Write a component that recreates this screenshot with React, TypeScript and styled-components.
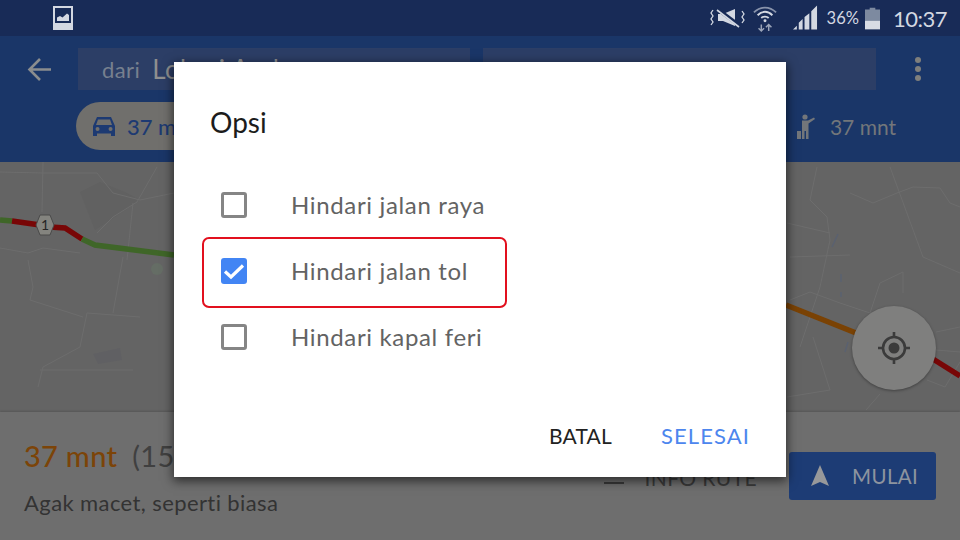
import React from "react";
import styled, { createGlobalStyle } from "styled-components";

const Global = createGlobalStyle`
  html, body { margin: 0; padding: 0; background: #6e6e6e; }
  * { box-sizing: border-box; }
`;

const Screen = styled.div`
  position: relative;
  width: 960px;
  height: 540px;
  overflow: hidden;
  display: flex;
  flex-direction: column;
  font-family: Lato, "Open Sans", sans-serif;
`;

const StatusBar = styled.div`
  height: 36px;
  flex: none;
  background: #182b57;
  display: flex;
  align-items: center;
  padding: 0 13px 0 53px;
  color: #d3d8e2;
`;
const StatusRight = styled.div`
  margin-left: auto;
  display: flex;
  align-items: center;
`;
const Battery = styled.span`
  font-size: 16.5px;
  margin: 0 6px 0 9px;
`;
const Clock = styled.span`
  font-size: 22px;
  margin-left: 13px;
  letter-spacing: -0.5px;
`;

const AppBar = styled.div`
  height: 126px;
  flex: none;
  background: #1a3668;
  display: flex;
  flex-direction: column;
  padding: 12px 0 12px 27px;
`;
const SearchRow = styled.div`
  display: flex;
  align-items: center;
  height: 42px;
`;
const SearchField = styled.div<{ $w: number }>`
  width: ${(p) => p.$w}px;
  height: 42px;
  background: #2c3e66;
  margin-right: 13px;
  display: flex;
  align-items: center;
  padding-left: 24px;
  font-size: 22px;
  color: #77808f;
  letter-spacing: 0.4px;
  white-space: nowrap;
  overflow: hidden;
  b { font-weight: 400; color: #8f8f8f; margin-left: 12px; font-size: 26px; }
`;
const BackBox = styled.div`
  width: 51px;
  height: 42px;
  flex: none;
  display: flex;
  align-items: center;
`;
const MoreBox = styled.div`
  margin-left: 26px;
  display: flex;
  flex-direction: column;
  gap: 3px;
`;
const Dot = styled.span`
  width: 6px;
  height: 6px;
  border-radius: 50%;
  background: #7f7f7c;
`;
const ModeRow = styled.div`
  display: flex;
  align-items: center;
  height: 48px;
  margin-top: 12px;
  padding-left: 49px;
  justify-content: space-between;
  padding-right: 64px;
`;
const ModePill = styled.div`
  width: 240px;
  height: 48px;
  border-radius: 24px;
  background: #706f6c;
  display: flex;
  align-items: center;
  padding-left: 17px;
  gap: 12px;
  color: #1d3a72;
  font-size: 22px;
  font-weight: 500;
`;
const WalkMode = styled.div`
  display: flex;
  align-items: center;
  gap: 15px;
  color: #73767a;
  font-size: 21px;
`;

const MapArea = styled.div`
  position: relative;
  height: 250px;
  flex: none;
  background: #646464;
  svg { display: block; }
`;
const LocateFab = styled.div`
  position: absolute;
  left: 852px;
  top: 144px;
  width: 84px;
  height: 84px;
  border-radius: 50%;
  background: #7f7f7e;
  box-shadow: 0 1px 3px rgba(0, 0, 0, 0.35);
  display: flex;
  align-items: center;
  justify-content: center;
`;

const BottomPanel = styled.div`
  flex: 1;
  background: #6e6e6e;
  display: flex;
  justify-content: space-between;
  padding: 26px 24px 0;
  box-shadow: 0 -1px 2px rgba(0, 0, 0, 0.15);
  position: relative;
`;
const Summary = styled.div`
  display: flex;
  flex-direction: column;
  gap: 16px;
`;
const Eta = styled.div`
  font-size: 29px;
  line-height: 36px;
  color: #7c4408;
  font-weight: 500;
  letter-spacing: 0.3px;
  span { color: #404040; margin-left: 15px; font-weight: 400; }
`;
const Traffic = styled.div`
  font-size: 22px;
  line-height: 26px;
  color: #333;
  letter-spacing: 0.4px;
`;
const Actions = styled.div`
  display: flex;
  align-items: flex-start;
  gap: 32px;
  padding-top: 14px;
`;
const InfoRoute = styled.div`
  display: flex;
  align-items: center;
  gap: 21px;
  font-size: 21px;
  line-height: 26px;
  color: #3a3a3a;
  margin-top: 13px;
  letter-spacing: 0.4px;
`;
const InfoIcon = styled.span`
  width: 20px;
  height: 12px;
  display: block;
  border-bottom: 2px solid #3a3a3a;
`;
const StartButton = styled.div`
  width: 147px;
  height: 48px;
  border-radius: 3px;
  background: #1d3c75;
  display: flex;
  align-items: center;
  padding-left: 22px;
  gap: 23px;
  color: #8d949f;
  font-size: 20.5px;
  letter-spacing: 0.4px;
`;

const Dialog = styled.div`
  position: absolute;
  left: 174px;
  top: 62px;
  width: 612px;
  height: 415px;
  background: #fff;
  box-shadow: 0 3px 10px 1px rgba(0, 0, 0, 0.6);
  display: flex;
  flex-direction: column;
  padding: 40px 36px 0 28px;
`;
const Title = styled.div`
  font-size: 28px;
  line-height: 40px;
  color: #1c1c1c;
  margin-left: 8px;
  height: 40px;
`;
const OptionList = styled.div`
  display: flex;
  flex-direction: column;
  margin-top: 30px;
`;
const Option = styled.div`
  height: 66px;
  display: flex;
  align-items: center;
  gap: 44px;
  padding-left: 19px;
  position: relative;
`;
const OptionLabel = styled.span`
  font-size: 24px;
  line-height: 28px;
  color: #636363;
  letter-spacing: 0.65px;
  margin-top: -1px;
`;
const CheckBox = styled.span<{ $on?: boolean }>`
  width: 26px;
  height: 26px;
  flex: none;
  border-radius: 3px;
  display: flex;
  align-items: center;
  justify-content: center;
  border: ${(p) => (p.$on ? "0" : "3px solid #858585")};
  background: ${(p) => (p.$on ? "#4285f4" : "transparent")};
`;
const Highlight = styled.div`
  position: absolute;
  left: 0;
  top: -1px;
  width: 305px;
  height: 71px;
  border: 2px solid #e2101e;
  border-radius: 7px;
`;
const DialogActions = styled.div`
  margin-top: auto;
  display: flex;
  justify-content: flex-end;
  gap: 49px;
  height: 55px;
`;
const ActionText = styled.span<{ $primary?: boolean }>`
  font-size: ${(p) => (p.$primary ? "22px" : "21px")};
  line-height: 28px;
  color: ${(p) => (p.$primary ? "#4d86ee" : "#222")};
  letter-spacing: ${(p) => (p.$primary ? "1.1px" : "0.2px")};
`;

const roads = [
  "M890 5L923 95L960 111",
  "M850 31L873 41L897 31L913 25L940 26L950 41L960 45",
  "M817 5L810 38L827 55L830 78L820 125L800 185",
  "M787 61L830 71",
  "M790 95L850 93",
  "M790 138L810 130L840 141L870 151",
  "M870 151L880 121L903 110L903 131",
  "M936 170L960 165",
  "M936 188L960 190",
  "M927 218L945 225L960 200",
  "M787 235L830 228L813 175",
  "M880 232L866 248",
  "M43 0L42 50",
  "M0 10L43 11L97 11L113 31L140 38L174 31",
  "M97 71L113 55L137 40L157 5",
  "M133 41L127 98",
  "M0 86L28 91L43 86L80 91",
  "M28 98L33 125L30 138L83 155",
  "M140 155L87 151L80 185L43 205L38 225",
  "M40 208L133 208",
  "M123 95L113 151",
];

export default function App() {
  return (
    <Screen>
      <Global />
      <StatusBar>
        <svg width="20" height="24" viewBox="0 0 20 24">
          <path d="M0 0H20V24H0Z M2 2V17H18V2Z" fill="#d3d8e2" fillRule="evenodd" />
          <path d="M4 15V11.5L7 10L9.5 11.5L14 7.5L16 9V15Z" fill="#d3d8e2" />
        </svg>
        <StatusRight>
          <svg width="35" height="24" viewBox="0 0 35 24" fill="none" stroke="#d3d8e2">
            <path d="M3 4L1 7L3 10L1 13L3 16L1 19M32 5L34 8L32 11L34 14L32 17" strokeWidth="1.3" />
            <path d="M8 8H13L25 3V20L13 15H8Z" fill="#d3d8e2" stroke="none" />
            <path d="M6 2L30 20" strokeWidth="4" stroke="#182b57" />
            <path d="M7 4L29 21" strokeWidth="1.6" />
          </svg>
          <svg style={{ marginLeft: 8 }} width="24" height="28" viewBox="0 0 26 28" fill="none" stroke="#d3d8e2">
            <path d="M1 8C8 1 18 1 25 8" strokeWidth="2" opacity=".6" />
            <path d="M5 11C10 6 16 6 21 11" strokeWidth="2" />
            <path d="M9 14C11 12 15 12 17 14" strokeWidth="2" />
            <circle cx="13" cy="17" r="1.6" fill="#d3d8e2" stroke="none" />
            <path d="M9 21V28M6 25L9 28L12 25M17 28V21M14 24L17 21L20 24" strokeWidth="1.6" opacity=".7" />
          </svg>
          <svg style={{ marginLeft: 16 }} width="25" height="26" viewBox="0 0 26 26">
            <path d="M0 25L4 21V25Z M6 25V18L10 14V25Z M12 25V12L17 8V25Z M19 25V6L25 0V25Z" fill="#d3d8e2" />
          </svg>
          <Battery>36%</Battery>
          <svg width="15" height="23" viewBox="0 0 16 23">
            <path d="M5 0H11V2H16V23H0V2H5Z" fill="#7d8aa0" />
            <path d="M0 14H16V23H0Z" fill="#d8dce4" />
          </svg>
          <Clock>10:37</Clock>
        </StatusRight>
      </StatusBar>

      <AppBar>
        <SearchRow>
          <BackBox>
            <svg width="25" height="25" viewBox="0 0 25 25" fill="none" stroke="#8b8d8e" strokeWidth="2.6">
              <path d="M24 12.5H3M13 2L2.5 12.5L13 23" />
            </svg>
          </BackBox>
          <SearchField $w={392}>dari<b>Lokasi Anda</b></SearchField>
          <SearchField $w={393}>ke Gamping, Kab. Mall</SearchField>
          <MoreBox><Dot /><Dot /><Dot /></MoreBox>
        </SearchRow>
        <ModeRow>
          <ModePill>
            <svg width="22" height="19" viewBox="0 0 22 19">
              <path d="M4 0H18L22 9V19H18V16.5H4V19H0V9ZM5 2.5L3 8H19L17 2.5ZM4.5 10A2 2 0 1 0 4.6 14 2 2 0 0 0 4.5 10ZM17.5 10A2 2 0 1 0 17.6 14 2 2 0 0 0 17.5 10Z" fill="#1d3a72" fillRule="evenodd" />
            </svg>
            37 mnt
          </ModePill>
          <WalkMode>
            <svg width="18" height="25" viewBox="0 0 18 25" fill="#73767a">
              <circle cx="8" cy="3" r="2.6" />
              <path d="M5 6.5H11L17 3.5L18 5L11.5 9.5V25H9V17H7.5V25H5Z" />
              <path d="M0 17H4V25H0Z" />
            </svg>
            37 mnt
          </WalkMode>
        </ModeRow>
      </AppBar>

      <MapArea>
        <svg width="960" height="250" viewBox="0 0 960 250">
          <path d="M80 30L100 20L125 30L140 38L115 55L95 68Z" fill="#616161" />
          <path d="M93 192L120 186L122 198L98 202Z" fill="#606063" />
          <g fill="none" stroke="#6d6d6d" strokeWidth="1">
            {roads.map((d) => <path key={d} d={d} />)}
          </g>
          <circle cx="157" cy="107" r="6" fill="#656d65" />
          <path d="M838 72L832 85M841 120V112M841 135V130M848 180L845 190" stroke="#5a6170" strokeWidth="1.5" fill="none" />
          <g fill="none" strokeWidth="5.5">
            <path d="M0 58L12 59" stroke="#3f6628" />
            <path d="M12 59L40 63M50 65L65 66L82 77" stroke="#780606" />
            <path d="M82 77L95 83L174 93" stroke="#3f6628" />
            <path d="M786 143L856 171" stroke="#7a4204" />
            <path d="M933 197L960 214" stroke="#780606" />
          </g>
          <path d="M36 63L40 53H50L54 63L50 73H40Z" fill="#84847f" stroke="#4a4a4a" strokeWidth="1" />
          <text x="45" y="68" fontSize="14" fontFamily="Lato, sans-serif" textAnchor="middle" fill="#262626">1</text>
        </svg>
        <LocateFab>
          <svg width="34" height="34" viewBox="0 0 34 34" fill="none" stroke="#3b3b3b">
            <circle cx="17" cy="17" r="11" strokeWidth="2.6" />
            <circle cx="17" cy="17" r="5.5" fill="#3b3b3b" stroke="none" />
            <path d="M17 1V6M17 28V33M1 17H6M28 17H33" strokeWidth="2.6" />
          </svg>
        </LocateFab>
      </MapArea>

      <BottomPanel>
        <Summary>
          <Eta>37 mnt<span>(15 km)</span></Eta>
          <Traffic>Agak macet, seperti biasa</Traffic>
        </Summary>
        <Actions>
          <InfoRoute><InfoIcon />INFO RUTE</InfoRoute>
          <StartButton>
            <svg width="18" height="22" viewBox="0 0 18 22">
              <path d="M9 0L18 21L9 17L0 21Z" fill="#97989a" />
            </svg>
            MULAI
          </StartButton>
        </Actions>
      </BottomPanel>

      <Dialog>
        <Title>Opsi</Title>
        <OptionList>
          <Option>
            <CheckBox />
            <OptionLabel>Hindari jalan raya</OptionLabel>
          </Option>
          <Option>
            <Highlight />
            <CheckBox $on>
              <svg width="22" height="17" viewBox="0 0 22 17" fill="none" stroke="#fff" strokeWidth="3.2">
                <path d="M2 8.5L8 14L20 2.5" />
              </svg>
            </CheckBox>
            <OptionLabel>Hindari jalan tol</OptionLabel>
          </Option>
          <Option>
            <CheckBox />
            <OptionLabel>Hindari kapal feri</OptionLabel>
          </Option>
        </OptionList>
        <DialogActions>
          <ActionText>BATAL</ActionText>
          <ActionText $primary>SELESAI</ActionText>
        </DialogActions>
      </Dialog>
    </Screen>
  );
}
